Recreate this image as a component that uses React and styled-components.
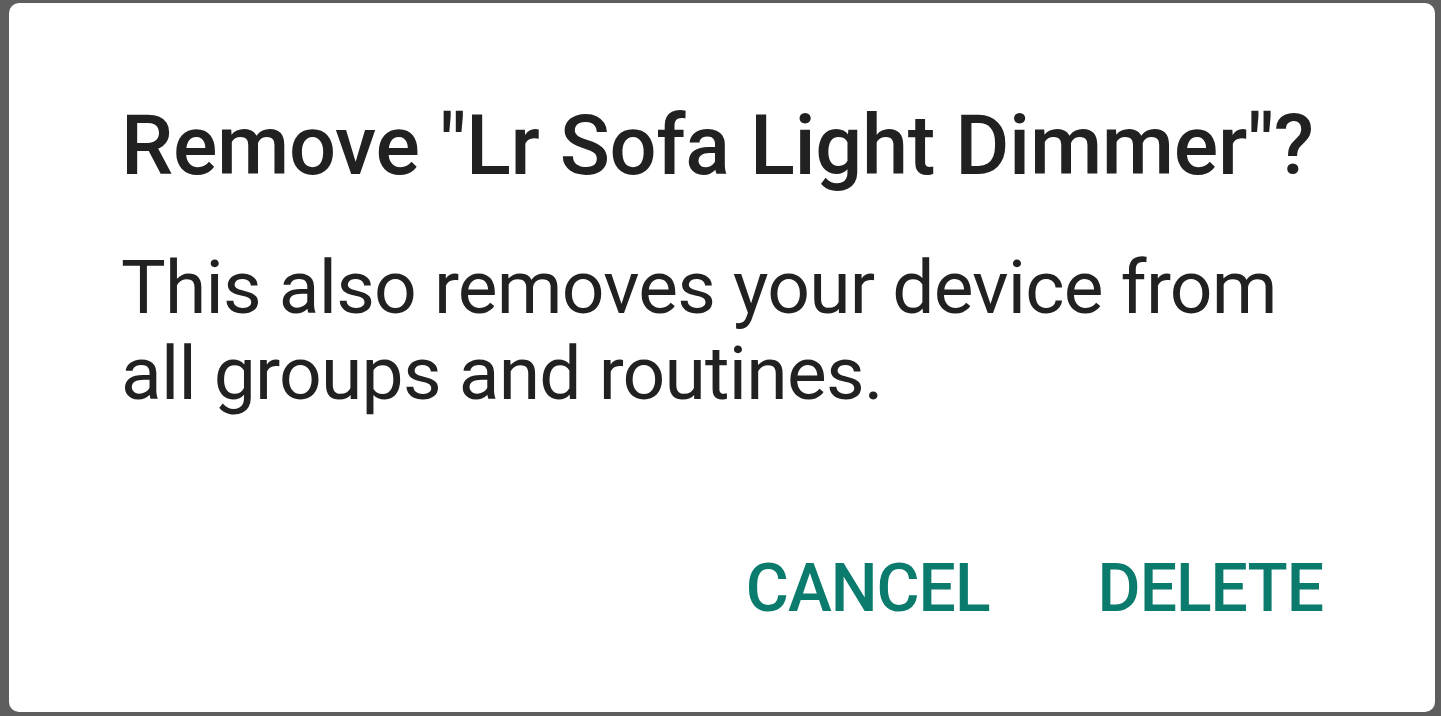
import styled, { createGlobalStyle } from "styled-components";

const GlobalStyle = createGlobalStyle`
  html, body {
    margin: 0;
    padding: 0;
    background: #5e5e5e;
    overflow: hidden;
  }
  body {
    font-family: Roboto, "Noto Sans", "Liberation Sans", sans-serif;
  }
`;

const Screen = styled.div`
  width: 1441px;
  height: 716px;
  padding: 3px 6px 4px 9px;
  box-sizing: border-box;
  display: flex;
`;

const Dialog = styled.div`
  flex: 1;
  background: #ffffff;
  border-radius: 10px;
  padding: 101px 112px 87px 112px;
  display: flex;
  flex-direction: column;
`;

const Title = styled.h2`
  margin: 0;
  font-size: 83px;
  line-height: 84px;
  letter-spacing: -0.35px;
  font-weight: 500;
  color: #212121;
  white-space: nowrap;
`;

const Message = styled.p`
  margin: 56px 0 0;
  font-size: 75px;
  line-height: 86px;
  letter-spacing: -0.78px;
  font-weight: 400;
  color: #212121;
`;

const Actions = styled.div`
  margin-top: auto;
  display: flex;
  justify-content: flex-end;
  gap: 108px;
`;

const ActionButton = styled.button`
  border: none;
  background: none;
  padding: 0;
  font-family: inherit;
  font-size: 66px;
  line-height: 73px;
  letter-spacing: -1px;
  font-weight: 500;
  text-transform: uppercase;
  color: #0a7b6c;
  cursor: pointer;
`;

export default function App() {
  return (
    <>
      <GlobalStyle />
      <Screen>
        <Dialog>
          <Title>Remove "Lr Sofa Light Dimmer"?</Title>
          <Message>
            This also removes your device from all groups and routines.
          </Message>
          <Actions>
            <ActionButton>Cancel</ActionButton>
            <ActionButton>Delete</ActionButton>
          </Actions>
        </Dialog>
      </Screen>
    </>
  );
}
